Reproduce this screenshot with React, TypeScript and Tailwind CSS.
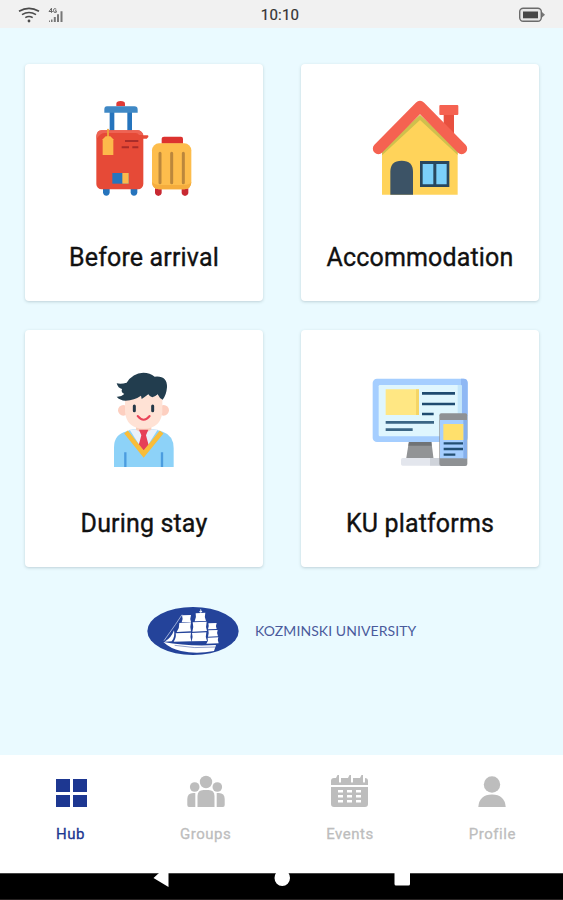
import type { ReactNode } from "react";

interface HubCardProps {
	label: string;
	children: ReactNode;
}

interface TabProps {
	label: string;
	active?: boolean;
	children: ReactNode;
}

function LuggageIcon() {
	return (
		<svg viewBox="0 0 360 336" className="w-[120px] h-[112px]">
			<path d="M97 43v-8q0-8 13-8t13 8v8z" fill="#e03a35" />
			<path d="M77 55h14v64H77zM130 55h14v64h-14z" fill="#2574bd" />
			<path d="M69 43h82q10 0 10 10v9H61v-9q0-10 8-10z" fill="#3f88c5" />
			<path d="M57 288h20v14q-2 9-10 9t-10-9zM140 288h20v14q-2 9-10 9t-10-9z" fill="#2574bd" />
			<rect x="37" y="115" width="141" height="177" rx="16" fill="#e64a37" />
			<path d="M38 131q0-16 15-16h109q10 0 16 14h-13q-3-6-10-6H62q-13 0-24 17z" fill="#ee6353" />
			<path d="M176 130h15q3 0 2 5l-5 5h-12z" fill="#e64a37" />
			<path d="M123 147h40M113 166h22M145 166h18" stroke="#a92c29" strokeWidth="6" />
			<path d="M72 113v28" stroke="#eda23b" strokeWidth="6" strokeLinecap="round" />
			<path d="M65 133h14l9 9v47H56v-47z" fill="#fdb94b" />
			<path d="M85 243h49v32H85z" fill="#2675bd" />
			<path d="M115 243h19v32h-19z" fill="#fdb94b" />
			<path d="M233 155v-15q0-6 7-6h51q6 0 6 6v15z" fill="#dc322f" />
			<path d="M213 289h20v15q-2 8-10 8t-10-8zM293 289h20v15q-2 8-10 8t-10-8z" fill="#c82932" />
			<rect x="204" y="154" width="118" height="138" rx="21" fill="#fdbd4c" />
			<path d="M204 270q8 9 24 9h72q15 0 22-8-1 21-21 21h-76q-21 0-21-22z" fill="#f5ad3d" />
			<path d="M228 184v88M263 184v88M298 184v88" stroke="#bb873c" strokeWidth="9" strokeLinecap="round" />
		</svg>
	);
}

function HouseIcon() {
	return (
		<svg viewBox="0 0 360 336" className="w-[120px] h-[112px]">
			<path d="M251 62h31v80h-31z" fill="#e8503f" />
			<rect x="238" y="39" width="57" height="30" rx="3" fill="#f56251" />
			<path d="M66 175 180 73l113 103v132H66z" fill="#ffd35a" />
			<path d="M66 172 180 68l113 104v17L180 84 66 190z" fill="#cfc04d" />
			<path d="M55 170 180 43 305 170" fill="none" stroke="#f56251" strokeWidth="33" strokeLinecap="round" strokeLinejoin="round" />
			<path d="M91 308v-69q0-33 34-33t34 33v69z" fill="#3c5366" />
			<path d="M180 207h88v78h-88z" fill="#28475e" />
			<path d="M188 216h32v61h-32zM229 216h31v61h-31z" fill="#7bd0fa" />
		</svg>
	);
}

function StudentIcon() {
	return (
		<svg viewBox="-48 -12 360 336" className="w-[120px] h-[112px]">
			<path d="M42 315v-58q0-40 38-49l18-7h64l26 8q33 11 33 50v56z" fill="#8dd2f8" />
			<path d="M88 202h86l-43 67z" fill="#eaf1fb" />
			<path d="M108 178h46v25l-23 13-23-13z" fill="#f9d0bd" />
			<circle cx="70" cy="145" r="16" fill="#fdcfc0" />
			<circle cx="191" cy="145" r="16" fill="#fdcfc0" />
			<path d="M75 100h112v50q-5 50-56 50t-56-50z" fill="#ffe2d5" />
			<path d="M50 64q14 3 30-2 18-29 50-30 20 0 34 12 38-4 37 32-2 24-13 37-10-4-15-16-6 6-16 9-9-3-12-9-9 7-20 14l-2-10q-20 14-46 15-18-1-27-12 14 1 23-8-11-5-7-15-12-2-16-17z" fill="#223d4e" />
			<path d="M103 132v14M158 132v14" stroke="#243848" strokeWidth="9" strokeLinecap="round" />
			<path d="M113 162q18 22 36 0" fill="none" stroke="#e94358" strokeWidth="6" strokeLinecap="round" />
			<path d="M117 203h28l-7 17 8 30-15 17-15-17 8-30z" fill="#e63f58" />
			<path d="M78 210 131 276 185 210" fill="none" stroke="#f9bd39" strokeWidth="14" strokeLinejoin="miter" />
			<path d="M76 271v44M186 271v44" stroke="#4b9cdf" strokeWidth="7" />
		</svg>
	);
}

function PlatformsIcon() {
	return (
		<svg viewBox="0 -24 360 336" className="w-[120px] h-[112px]">
			<path d="M147 225h67l7 56h-83z" fill="#929496" />
			<path d="M147 228h67l1 11h-70z" fill="#707376" />
			<rect x="123" y="276" width="120" height="23" rx="5" fill="#e3e6ed" />
			<path d="M210 276h33v23h-33z" fill="#cfd3da" />
			<rect x="38" y="38" width="285" height="190" rx="13" fill="#a5ceff" />
			<path d="M303 38h8q12 0 12 13v95h-20z" fill="#8fb8f4" />
			<rect x="56" y="57" width="249" height="154" rx="4" fill="#dff6fe" />
			<path d="M293 57h12v88h-12z" fill="#c4e7fb" />
			<path d="M77 70h100v77H77z" fill="#ffe783" />
			<path d="M168 70h9v77h-9z" fill="#f5d566" />
			<g stroke="#1f4b70" strokeWidth="8">
				<path d="M186 82h99M186 114h99M186 144h35" />
				<path d="M77 169h145M77 191h81" stroke="#3b6685" />
			</g>
			<rect x="238" y="142" width="84" height="158" rx="6" fill="#8e9194" />
			<path d="M240 162h81v115h-81z" fill="#a5ceff" />
			<path d="M310 162h11v115h-11z" fill="#86b0eb" />
			<path d="M250 174h60v48h-60z" fill="#ffe06c" />
			<path d="M251 232h58M251 249h58M251 266h35" stroke="#234f73" strokeWidth="7" />
		</svg>
	);
}

function ShipLogo() {
	return (
		<svg viewBox="21 18 276 150" className="w-[92px] h-[50px]">
			<ellipse cx="159" cy="93" rx="137" ry="72" fill="#24439a" />
			<g fill="#fff">
				<path d="M126 46l27-1q-4 11 0 21l-28 1q5-11 1-21z" />
				<path d="M167 40l29-2q-4 13 2 25l-34 1q6-12 3-24z" />
				<path d="M118 69l35-2q-4 14 0 27l-43 2q9-13 8-27z" />
				<path d="M158 67l42-2q-4 15 1 28l-44 2q5-14 1-28z" />
				<path d="M107 100l46-2q-4 14 1 26l-53 1q9-13 6-25z" />
				<path d="M156 99l43-2q-4 13 2 26l-46 1q5-13 1-25z" />
				<path d="M205 70l25-1q-4 8 0 18l-26 1q4-9 1-18z" />
				<path d="M205 91l28-1q-4 9 1 19l-30 1q4-9 1-19z" />
				<path d="M203 113l32-1q-4 9 1 18l-37 1q7-9 4-18z" />
				<path d="M102 91q-8 23-28 34l21-1q11-13 7-33z" />
				<path d="M70 126q76 14 158 9l-6 18q-53 10-99 0-32-7-53-27z" />
				<path d="M178 34q5-5 9 0l-2 3h-6z" />
			</g>
			<path d="M104 136q60 11 121 5" fill="none" stroke="#596eb0" strokeWidth="2" />
			<path d="M72 122l34-48 20-30M182 27v12" fill="none" stroke="#dbe4f6" strokeWidth="2" />
		</svg>
	);
}

function HubCard({ label, children }: HubCardProps) {
	return (
		<div className="flex flex-col items-center h-[237px] pt-7 bg-white rounded shadow-[0_1px_3px_rgba(60,90,100,0.25)]">
			{children}
			<h2 className="mt-[38px] text-[25px] leading-8 tracking-[0.15px] text-[#111] whitespace-nowrap [-webkit-text-stroke:0.35px_#111]">
				{label}
			</h2>
		</div>
	);
}

function Tab({ label, active = false, children }: TabProps) {
	return (
		<button className={`flex flex-col items-center ${active ? "text-[#1d3791]" : "text-[#bdbdbd]"}`}>
			<svg viewBox="0 0 40 36" className="w-10 h-9 -mx-2" fill="currentColor">
				{children}
			</svg>
			<span className="mt-[13px] text-[15px] leading-5 tracking-[0.55px] [-webkit-text-stroke:0.3px_currentColor]">{label}</span>
		</button>
	);
}

function StatusBar() {
	return (
		<header className="grid grid-cols-3 items-center h-7 pl-[18px] pr-[17px] bg-[#f1f1f1] text-[#4b4b4b]">
			<div className="flex items-center gap-2 pt-0.5">
				<svg viewBox="0 0 22 16" className="w-[22px] h-4" fill="none" stroke="currentColor" strokeWidth="1.6">
					<path d="M1 4.3Q11-1.6 21 4.3M4 7.6Q11 3.4 18 7.6M7.3 10.7Q11 8.3 14.7 10.7" />
					<circle cx="11" cy="14" r="1.4" fill="currentColor" stroke="none" />
				</svg>
				<svg viewBox="0 0 16 16" className="w-4 h-4" fill="#777">
					<path d="M3 12.5h1.5V15H3zM5.8 10h2v5h-2zM9 7.2h2V15H9zM12.5 4.2h2V15h-2zM1 13.5h1V15H1z" />
					<path d="M3.5 5.8V1.2L1 4.5h3.8M8.3 2.2Q5.5.7 5.5 3.5t2.8 1.8V3.8H7" fill="none" stroke="#666" strokeWidth="1" />
				</svg>
			</div>
			<span className="pt-0.5 pr-1 text-center text-[15px] leading-[26px] tracking-[0.2px] text-[#333] [-webkit-text-stroke:0.2px_#333]">10:10</span>
			<svg viewBox="0 0 28 16" className="w-7 h-4 mt-0.5 justify-self-end">
				<rect x="1.7" y="1.2" width="21.6" height="13" rx="3.5" fill="#e8e8e8" stroke="#6b6b6b" strokeWidth="1.4" />
				<path d="M5 4.5h15v6.8H5z" fill="#484848" />
				<path d="M24 5l3 2.8-3 2.8z" fill="#777" />
			</svg>
		</header>
	);
}

export default function App() {
	return (
		<div className="flex flex-col h-[900px] w-[563px] overflow-hidden bg-[#eafaff] font-['Roboto',sans-serif]">
			<StatusBar />

			<main className="flex-1 px-6 pt-9">
				<div className="grid grid-cols-[238px_238px] gap-x-[38px] gap-y-[29px] pl-px">
					<HubCard label="Before arrival">
						<LuggageIcon />
					</HubCard>
					<HubCard label="Accommodation">
						<HouseIcon />
					</HubCard>
					<HubCard label="During stay">
						<StudentIcon />
					</HubCard>
					<HubCard label="KU platforms">
						<PlatformsIcon />
					</HubCard>
				</div>

				<div className="flex items-center gap-4 mt-[39px] pl-[123px]">
					<ShipLogo />
					<span className="text-[14px] leading-5 tracking-[0.08px] text-[#4a5a9c] whitespace-nowrap font-['Lato',sans-serif]">KOZMINSKI UNIVERSITY</span>
				</div>
			</main>

			<nav className="flex items-start justify-between h-[118px] pt-5 pl-14 pr-[47px] bg-white">
				<Tab label="Hub" active>
					<path d="M5 4h14v13H5zM22 4h14v13H22zM5 20h14v12H5zM22 20h14v12H22z" />
				</Tab>
				<Tab label="Groups">
					<circle cx="20" cy="7" r="6.2" />
					<circle cx="8.7" cy="12" r="4.8" />
					<circle cx="31.3" cy="12" r="4.8" />
					<path d="M11.5 32V21q0-6 6-6h5q6 0 6 6v11zM9.3 32H3q-1.700 0-1.700-2v-6q0-6 6-6h2zM30.700 32H37q1.700 0 1.700-2v-6q0-6-6-6h-2z" />
				</Tab>
				<Tab label="Events">
					<path d="M1 10V6q0-3 3-3h2l1.500-3H9v7q1 1.500 2 0V3h7l1.500-3H21v7q1 1.500 2 0V3h7l1.500-3H33v7q1 1.500 2 0V3q3 0 3 3v4z" />
					<path
						fillRule="evenodd"
						d="M1 12h37v17q0 3-3 3H4q-3 0-3-3zM8 15v2.500h5v-2.500zM17 15v2.500h5v-2.500zM26 15v2.500h5v-2.500zM8 20v2.500h5v-2.500zM17 20v2.500h5v-2.500zM26 20v2.500h5v-2.500zM8 25v2.500h5v-2.500zM17 25v2.500h5v-2.500zM26 25v2.500h5v-2.500z"
					/>
				</Tab>
				<Tab label="Profile">
					<circle cx="20" cy="9.500" r="8.200" />
					<path d="M6.300 32q1-12.500 13.700-12.500T33.700 32z" />
				</Tab>
			</nav>

			<footer className="h-[27px] bg-black border-b border-[#262222]">
				<svg viewBox="0 0 563 26" className="w-full h-[26px]" fill="#fff">
					<path d="M0 0h563v.6H0z" fill="#888" />
					<path d="M159 0h9.500v14L153.500 5zM276 0h12.500q1.500 2 1.500 5a7.750 8 0 0 1-15.500 0q0-3 1.500-5zM394.500 0H410v11q0 1.500-1.500 1.500H396q-1.500 0-1.500-1.500z" />
				</svg>
			</footer>
		</div>
	);
}
